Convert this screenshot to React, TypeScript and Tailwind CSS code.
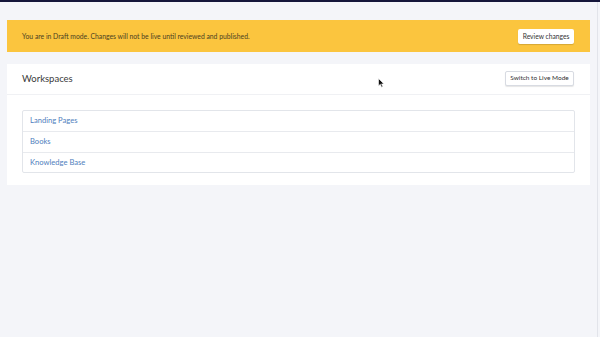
import React from "react";

export default function App() {
  const items = ["Landing Pages", "Books", "Knowledge Base"];
  return (
    <div
      className="relative w-[600px] h-[337px] bg-[#f4f5f9] overflow-hidden"
      style={{ fontFamily: "Lato, 'Open Sans', sans-serif" }}
    >
      <div className="h-[2px] bg-[#15163a]" />
      <div className="w-[598px] h-[335px] border-r border-[#e2e4ea] px-[7px] pt-[18px]">
        <div className="h-[32px] bg-[#fbc53e] flex items-center justify-between pl-[15px] pr-[16px]">
          <span className="text-[6.8px] text-[#4b3f22]">
            You are in Draft mode. Changes will not be live until reviewed and published.
          </span>
          <button className="h-[15px] w-[56px] bg-white rounded-[2px] text-[6.7px] text-[#333] shadow-[0_1px_1px_rgba(0,0,0,0.15)]">
            Review changes
          </button>
        </div>
        <div className="mt-[12px] bg-white">
          <div className="h-[31px] border-b border-[#f0f1f4] flex items-center justify-between pl-[15px] pr-[16px]">
            <span className="text-[9.5px] text-[#3a3a3a]">Workspaces</span>
            <button className="h-[15px] w-[69px] bg-white rounded-[2px] border border-[#d8dbe2] text-[6.5px] text-[#333] shadow-[0_1px_1px_rgba(0,0,0,0.1)] -mt-[2px]">
              Switch to Live Mode
            </button>
          </div>
          <div className="pt-[15px] pb-[12px] px-[15px]">
            <div className="border border-[#e2e5ea] rounded-[2px]">
              {items.map((it, i) => (
                <div
                  key={it}
                  className={`h-[20.3px] flex items-center pl-[7px] text-[7.6px] text-[#4f80bd] ${i > 0 ? "border-t border-[#e8eaee]" : ""}`}
                >
                  {it}
                </div>
              ))}
            </div>
          </div>
        </div>
      </div>
      <svg className="absolute left-[378px] top-[78px]" width="7" height="10" viewBox="0 0 7 10">
        <path d="M0.5 0.5 L0.5 8 L2.3 6.3 L3.6 9.3 L4.8 8.8 L3.6 5.9 L6 5.9 Z" fill="#111" stroke="#fff" strokeWidth="0.6" />
      </svg>
    </div>
  );
}
